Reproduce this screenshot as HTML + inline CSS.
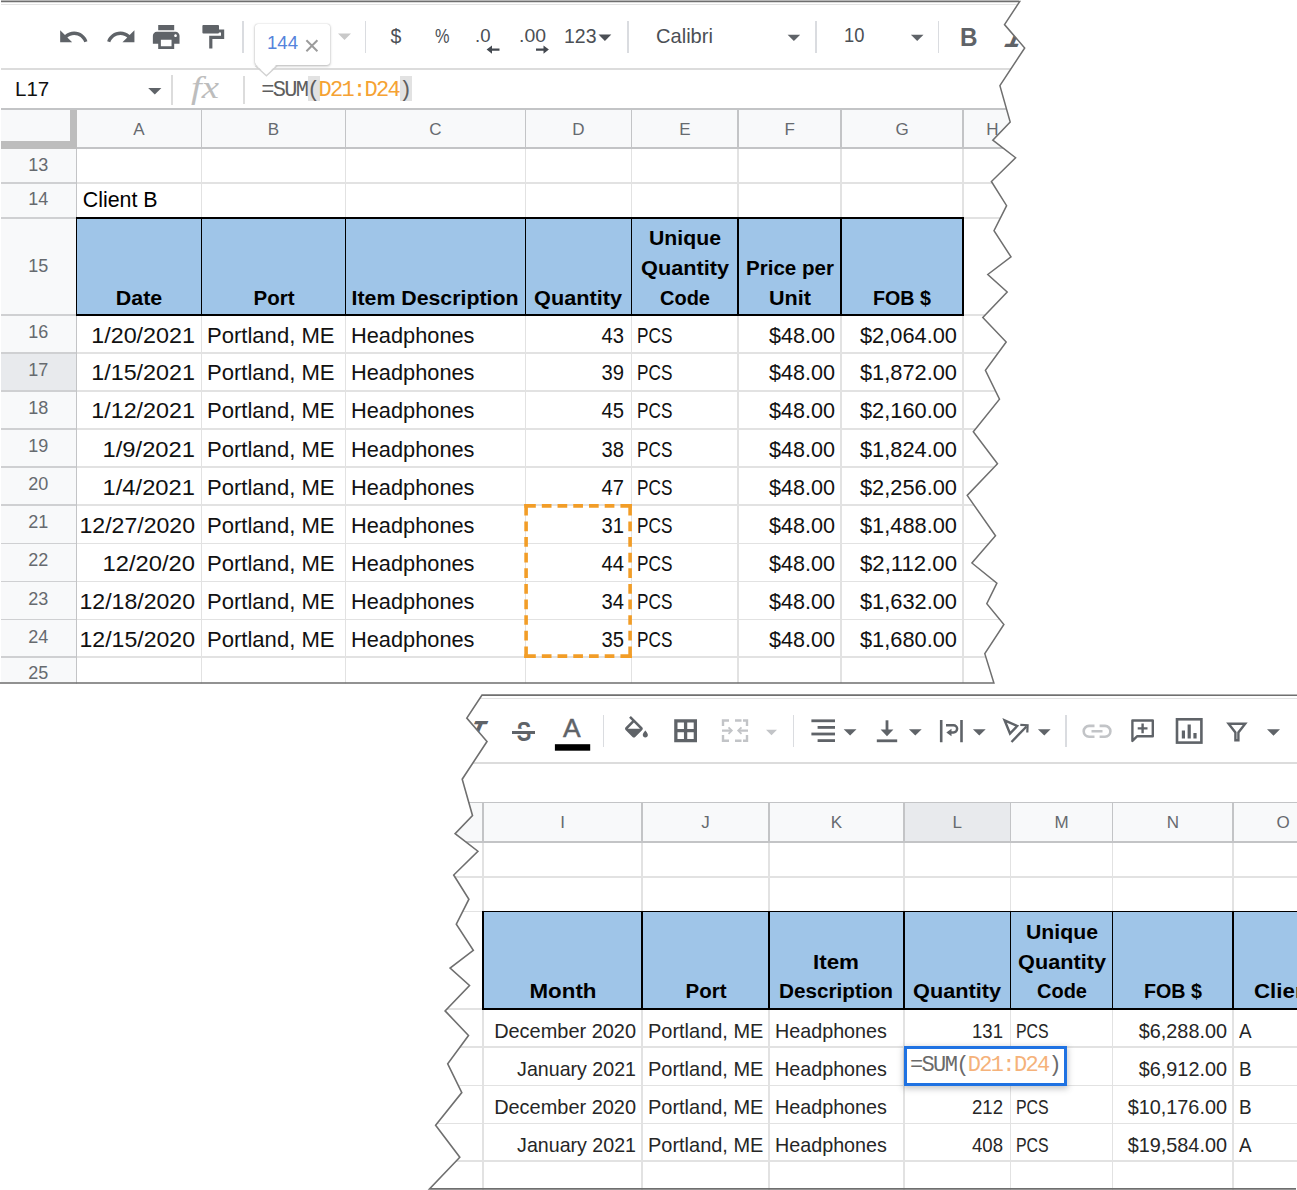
<!DOCTYPE html>
<html><head><meta charset="utf-8"><title>Sheets SUM example</title>
<style>
html,body{margin:0;padding:0;background:#fff;}
body{width:1297px;height:1190px;position:relative;overflow:hidden;}
.frag{position:absolute;left:0;top:0;width:1297px;height:1190px;overflow:hidden;}
.t{position:absolute;white-space:nowrap;display:block;}
.l{position:absolute;display:block;}
svg{position:absolute;left:0;top:0;overflow:visible;}
</style></head><body>
<div class="frag" id="sheet1" style="clip-path:polygon(0px 0px,1019.7px 1.6px,1004.5px 24.6px,1024.7px 48px,999.9px 85.7px,1010.2px 122px,992.8px 140.2px,1015.6px 157.7px,991.4px 181.5px,1006.6px 205.7px,994px 230.7px,1011px 256.9px,987.8px 274.5px,1007.2px 292px,982.8px 317.4px,1006.2px 342px,985.4px 370.3px,999.5px 399.1px,973.3px 431.8px,997.5px 463.7px,967.2px 495.4px,995.5px 535.7px,971.9px 563px,996.9px 583.1px,986.8px 603.7px,1003.9px 624.5px,984.8px 653.7px,993.9px 683px,0px 683.8px)">
<i class="l" style="left:0.0px;top:3.75px;width:1040.0px;height:1.5px;background:#e3e3e3"></i>
<i class="l" style="left:0.0px;top:68.40px;width:1040.0px;height:1.8px;background:#dcdcdc"></i>
<i class="l" style="left:0.0px;top:109.0px;width:1040.0px;height:39.2px;background:#f8f9fa;"></i>
<i class="l" style="left:0.0px;top:148.2px;width:76.3px;height:535.8px;background:#f8f9fa;"></i>
<i class="l" style="left:0.0px;top:352.8px;width:76.3px;height:38.1px;background:#e8eaed;"></i>
<i class="l" style="left:76.3px;top:218.0px;width:886.7px;height:97.0px;background:#9fc5e8;"></i>
<i class="l" style="left:76.3px;top:182.25px;width:963.7px;height:1.5px;background:#e2e2e2"></i>
<i class="l" style="left:76.3px;top:217.25px;width:963.7px;height:1.5px;background:#e2e2e2"></i>
<i class="l" style="left:76.3px;top:314.25px;width:963.7px;height:1.5px;background:#e2e2e2"></i>
<i class="l" style="left:76.3px;top:352.05px;width:963.7px;height:1.5px;background:#e2e2e2"></i>
<i class="l" style="left:76.3px;top:390.15px;width:963.7px;height:1.5px;background:#e2e2e2"></i>
<i class="l" style="left:76.3px;top:428.25px;width:963.7px;height:1.5px;background:#e2e2e2"></i>
<i class="l" style="left:76.3px;top:466.35px;width:963.7px;height:1.5px;background:#e2e2e2"></i>
<i class="l" style="left:76.3px;top:504.45px;width:963.7px;height:1.5px;background:#e2e2e2"></i>
<i class="l" style="left:76.3px;top:542.55px;width:963.7px;height:1.5px;background:#e2e2e2"></i>
<i class="l" style="left:76.3px;top:580.65px;width:963.7px;height:1.5px;background:#e2e2e2"></i>
<i class="l" style="left:76.3px;top:618.75px;width:963.7px;height:1.5px;background:#e2e2e2"></i>
<i class="l" style="left:76.3px;top:656.45px;width:963.7px;height:1.5px;background:#e2e2e2"></i>
<i class="l" style="left:200.85px;top:148.2px;width:1.5px;height:535.8px;background:#e2e2e2"></i>
<i class="l" style="left:344.65px;top:148.2px;width:1.5px;height:535.8px;background:#e2e2e2"></i>
<i class="l" style="left:524.65px;top:148.2px;width:1.5px;height:535.8px;background:#e2e2e2"></i>
<i class="l" style="left:630.65px;top:148.2px;width:1.5px;height:535.8px;background:#e2e2e2"></i>
<i class="l" style="left:737.45px;top:148.2px;width:1.5px;height:535.8px;background:#e2e2e2"></i>
<i class="l" style="left:840.45px;top:148.2px;width:1.5px;height:535.8px;background:#e2e2e2"></i>
<i class="l" style="left:962.25px;top:148.2px;width:1.5px;height:535.8px;background:#e2e2e2"></i>
<i class="l" style="left:0.0px;top:108.25px;width:1040.0px;height:1.5px;background:#c3c4c6"></i>
<i class="l" style="left:0.0px;top:147.45px;width:1040.0px;height:1.5px;background:#c3c4c6"></i>
<i class="l" style="left:200.85px;top:109.0px;width:1.5px;height:39.2px;background:#c3c4c6"></i>
<i class="l" style="left:344.65px;top:109.0px;width:1.5px;height:39.2px;background:#c3c4c6"></i>
<i class="l" style="left:524.65px;top:109.0px;width:1.5px;height:39.2px;background:#c3c4c6"></i>
<i class="l" style="left:630.65px;top:109.0px;width:1.5px;height:39.2px;background:#c3c4c6"></i>
<i class="l" style="left:737.45px;top:109.0px;width:1.5px;height:39.2px;background:#c3c4c6"></i>
<i class="l" style="left:840.45px;top:109.0px;width:1.5px;height:39.2px;background:#c3c4c6"></i>
<i class="l" style="left:962.25px;top:109.0px;width:1.5px;height:39.2px;background:#c3c4c6"></i>
<i class="l" style="left:0.0px;top:182.25px;width:76.3px;height:1.5px;background:#cfd0d2"></i>
<i class="l" style="left:0.0px;top:217.25px;width:76.3px;height:1.5px;background:#cfd0d2"></i>
<i class="l" style="left:0.0px;top:314.25px;width:76.3px;height:1.5px;background:#cfd0d2"></i>
<i class="l" style="left:0.0px;top:352.05px;width:76.3px;height:1.5px;background:#cfd0d2"></i>
<i class="l" style="left:0.0px;top:390.15px;width:76.3px;height:1.5px;background:#cfd0d2"></i>
<i class="l" style="left:0.0px;top:428.25px;width:76.3px;height:1.5px;background:#cfd0d2"></i>
<i class="l" style="left:0.0px;top:466.35px;width:76.3px;height:1.5px;background:#cfd0d2"></i>
<i class="l" style="left:0.0px;top:504.45px;width:76.3px;height:1.5px;background:#cfd0d2"></i>
<i class="l" style="left:0.0px;top:542.55px;width:76.3px;height:1.5px;background:#cfd0d2"></i>
<i class="l" style="left:0.0px;top:580.65px;width:76.3px;height:1.5px;background:#cfd0d2"></i>
<i class="l" style="left:0.0px;top:618.75px;width:76.3px;height:1.5px;background:#cfd0d2"></i>
<i class="l" style="left:0.0px;top:656.45px;width:76.3px;height:1.5px;background:#cfd0d2"></i>
<i class="l" style="left:75.55px;top:148.2px;width:1.5px;height:535.8px;background:#c3c4c6"></i>
<i class="l" style="left:69.8px;top:109.8px;width:7.0px;height:39.0px;background:#bdbdbd;"></i>
<i class="l" style="left:0.0px;top:141.4px;width:76.8px;height:7.4px;background:#bdbdbd;"></i>
<i class="l" style="left:75.6px;top:217.25px;width:888.1px;height:1.5px;background:#000"></i>
<i class="l" style="left:75.6px;top:314.25px;width:888.1px;height:1.5px;background:#000"></i>
<i class="l" style="left:75.55px;top:218.0px;width:1.5px;height:97.0px;background:#000"></i>
<i class="l" style="left:200.85px;top:218.0px;width:1.5px;height:97.0px;background:#000"></i>
<i class="l" style="left:344.65px;top:218.0px;width:1.5px;height:97.0px;background:#000"></i>
<i class="l" style="left:524.65px;top:218.0px;width:1.5px;height:97.0px;background:#000"></i>
<i class="l" style="left:630.65px;top:218.0px;width:1.5px;height:97.0px;background:#000"></i>
<i class="l" style="left:737.45px;top:218.0px;width:1.5px;height:97.0px;background:#000"></i>
<i class="l" style="left:840.45px;top:218.0px;width:1.5px;height:97.0px;background:#000"></i>
<i class="l" style="left:962.25px;top:218.0px;width:1.5px;height:97.0px;background:#000"></i>
<span class="t" style="left:138.9px;top:120.6px;font:17px/17px 'Liberation Sans',Arial,sans-serif;color:#666a6f;transform:translateX(-50%);transform-origin:center center;">A</span>
<span class="t" style="left:273.5px;top:120.6px;font:17px/17px 'Liberation Sans',Arial,sans-serif;color:#666a6f;transform:translateX(-50%);transform-origin:center center;">B</span>
<span class="t" style="left:435.4px;top:120.6px;font:17px/17px 'Liberation Sans',Arial,sans-serif;color:#666a6f;transform:translateX(-50%);transform-origin:center center;">C</span>
<span class="t" style="left:578.4px;top:120.6px;font:17px/17px 'Liberation Sans',Arial,sans-serif;color:#666a6f;transform:translateX(-50%);transform-origin:center center;">D</span>
<span class="t" style="left:684.8px;top:120.6px;font:17px/17px 'Liberation Sans',Arial,sans-serif;color:#666a6f;transform:translateX(-50%);transform-origin:center center;">E</span>
<span class="t" style="left:789.7px;top:120.6px;font:17px/17px 'Liberation Sans',Arial,sans-serif;color:#666a6f;transform:translateX(-50%);transform-origin:center center;">F</span>
<span class="t" style="left:902.1px;top:120.6px;font:17px/17px 'Liberation Sans',Arial,sans-serif;color:#666a6f;transform:translateX(-50%);transform-origin:center center;">G</span>
<span class="t" style="left:992.5px;top:120.6px;font:17px/17px 'Liberation Sans',Arial,sans-serif;color:#666a6f;transform:translateX(-50%);transform-origin:center center;">H</span>
<span class="t" style="left:38.3px;top:155.6px;font:18px/18px 'Liberation Sans',Arial,sans-serif;color:#666a6f;transform:translateX(-50%);transform-origin:center center;">13</span>
<span class="t" style="left:38.3px;top:190.4px;font:18px/18px 'Liberation Sans',Arial,sans-serif;color:#666a6f;transform:translateX(-50%);transform-origin:center center;">14</span>
<span class="t" style="left:38.3px;top:256.6px;font:18px/18px 'Liberation Sans',Arial,sans-serif;color:#666a6f;transform:translateX(-50%);transform-origin:center center;">15</span>
<span class="t" style="left:38.3px;top:323.1px;font:18px/18px 'Liberation Sans',Arial,sans-serif;color:#666a6f;transform:translateX(-50%);transform-origin:center center;">16</span>
<span class="t" style="left:38.3px;top:360.9px;font:18px/18px 'Liberation Sans',Arial,sans-serif;color:#666a6f;transform:translateX(-50%);transform-origin:center center;">17</span>
<span class="t" style="left:38.3px;top:399.0px;font:18px/18px 'Liberation Sans',Arial,sans-serif;color:#666a6f;transform:translateX(-50%);transform-origin:center center;">18</span>
<span class="t" style="left:38.3px;top:437.1px;font:18px/18px 'Liberation Sans',Arial,sans-serif;color:#666a6f;transform:translateX(-50%);transform-origin:center center;">19</span>
<span class="t" style="left:38.3px;top:475.2px;font:18px/18px 'Liberation Sans',Arial,sans-serif;color:#666a6f;transform:translateX(-50%);transform-origin:center center;">20</span>
<span class="t" style="left:38.3px;top:513.3px;font:18px/18px 'Liberation Sans',Arial,sans-serif;color:#666a6f;transform:translateX(-50%);transform-origin:center center;">21</span>
<span class="t" style="left:38.3px;top:551.4px;font:18px/18px 'Liberation Sans',Arial,sans-serif;color:#666a6f;transform:translateX(-50%);transform-origin:center center;">22</span>
<span class="t" style="left:38.3px;top:589.5px;font:18px/18px 'Liberation Sans',Arial,sans-serif;color:#666a6f;transform:translateX(-50%);transform-origin:center center;">23</span>
<span class="t" style="left:38.3px;top:627.6px;font:18px/18px 'Liberation Sans',Arial,sans-serif;color:#666a6f;transform:translateX(-50%);transform-origin:center center;">24</span>
<span class="t" style="left:38.3px;top:664.1px;font:18px/18px 'Liberation Sans',Arial,sans-serif;color:#666a6f;transform:translateX(-50%);transform-origin:center center;">25</span>
<span class="t" style="left:82.7px;top:189.6px;font:21.4px/21.4px 'Liberation Sans',Arial,sans-serif;color:#000;">Client B</span>
<span class="t" style="left:138.9px;top:287.5px;font:bold 20.7px/20.7px 'Liberation Sans',Arial,sans-serif;color:#000;transform:translateX(-50%) scaleX(1.0364);transform-origin:center center;">Date</span>
<span class="t" style="left:273.5px;top:287.5px;font:bold 20.7px/20.7px 'Liberation Sans',Arial,sans-serif;color:#000;transform:translateX(-50%) scaleX(0.9903);transform-origin:center center;">Port</span>
<span class="t" style="left:435.4px;top:287.5px;font:bold 20.7px/20.7px 'Liberation Sans',Arial,sans-serif;color:#000;transform:translateX(-50%) scaleX(1.0297);transform-origin:center center;">Item Description</span>
<span class="t" style="left:578.4px;top:287.5px;font:bold 20.7px/20.7px 'Liberation Sans',Arial,sans-serif;color:#000;transform:translateX(-50%) scaleX(1.0482);transform-origin:center center;">Quantity</span>
<span class="t" style="left:685.3px;top:228.1px;font:bold 20.7px/20.7px 'Liberation Sans',Arial,sans-serif;color:#000;transform:translateX(-50%) scaleX(1.0264);transform-origin:center center;">Unique</span>
<span class="t" style="left:685.3px;top:257.8px;font:bold 20.7px/20.7px 'Liberation Sans',Arial,sans-serif;color:#000;transform:translateX(-50%) scaleX(1.0482);transform-origin:center center;">Quantity</span>
<span class="t" style="left:685.3px;top:287.5px;font:bold 20.7px/20.7px 'Liberation Sans',Arial,sans-serif;color:#000;transform:translateX(-50%) scaleX(0.9662);transform-origin:center center;">Code</span>
<span class="t" style="left:789.7px;top:257.8px;font:bold 20.7px/20.7px 'Liberation Sans',Arial,sans-serif;color:#000;transform:translateX(-50%) scaleX(0.9932);transform-origin:center center;">Price per</span>
<span class="t" style="left:789.7px;top:287.5px;font:bold 20.7px/20.7px 'Liberation Sans',Arial,sans-serif;color:#000;transform:translateX(-50%) scaleX(1.0438);transform-origin:center center;">Unit</span>
<span class="t" style="left:902.1px;top:287.5px;font:bold 20.7px/20.7px 'Liberation Sans',Arial,sans-serif;color:#000;transform:translateX(-50%) scaleX(0.9515);transform-origin:center center;">FOB $</span>
<span class="t" style="left:195.0px;top:325.5px;font:21.5px/21.5px 'Liberation Sans',Arial,sans-serif;color:#111;transform:translateX(-100%) scaleX(1.0852);transform-origin:right center;">1/20/2021</span>
<span class="t" style="left:207.4px;top:325.5px;font:21.5px/21.5px 'Liberation Sans',Arial,sans-serif;color:#111;transform:scaleX(1.0259);transform-origin:left center;">Portland, ME</span>
<span class="t" style="left:351.3px;top:325.5px;font:21.5px/21.5px 'Liberation Sans',Arial,sans-serif;color:#111;transform:scaleX(1.0128);transform-origin:left center;">Headphones</span>
<span class="t" style="left:624.2px;top:325.5px;font:21.5px/21.5px 'Liberation Sans',Arial,sans-serif;color:#111;transform:translateX(-100%) scaleX(0.9408);transform-origin:right center;">43</span>
<span class="t" style="left:637.3px;top:325.5px;font:21.5px/21.5px 'Liberation Sans',Arial,sans-serif;color:#111;transform:scaleX(0.8007);transform-origin:left center;">PCS</span>
<span class="t" style="left:835.0px;top:325.5px;font:21.5px/21.5px 'Liberation Sans',Arial,sans-serif;color:#111;transform:translateX(-100%) scaleX(1.0036);transform-origin:right center;">$48.00</span>
<span class="t" style="left:957.2px;top:325.5px;font:21.5px/21.5px 'Liberation Sans',Arial,sans-serif;color:#111;transform:translateX(-100%) scaleX(1.0141);transform-origin:right center;">$2,064.00</span>
<span class="t" style="left:195.0px;top:363.3px;font:21.5px/21.5px 'Liberation Sans',Arial,sans-serif;color:#111;transform:translateX(-100%) scaleX(1.0852);transform-origin:right center;">1/15/2021</span>
<span class="t" style="left:207.4px;top:363.3px;font:21.5px/21.5px 'Liberation Sans',Arial,sans-serif;color:#111;transform:scaleX(1.0259);transform-origin:left center;">Portland, ME</span>
<span class="t" style="left:351.3px;top:363.3px;font:21.5px/21.5px 'Liberation Sans',Arial,sans-serif;color:#111;transform:scaleX(1.0128);transform-origin:left center;">Headphones</span>
<span class="t" style="left:624.2px;top:363.3px;font:21.5px/21.5px 'Liberation Sans',Arial,sans-serif;color:#111;transform:translateX(-100%) scaleX(0.9408);transform-origin:right center;">39</span>
<span class="t" style="left:637.3px;top:363.3px;font:21.5px/21.5px 'Liberation Sans',Arial,sans-serif;color:#111;transform:scaleX(0.8007);transform-origin:left center;">PCS</span>
<span class="t" style="left:835.0px;top:363.3px;font:21.5px/21.5px 'Liberation Sans',Arial,sans-serif;color:#111;transform:translateX(-100%) scaleX(1.0036);transform-origin:right center;">$48.00</span>
<span class="t" style="left:957.2px;top:363.3px;font:21.5px/21.5px 'Liberation Sans',Arial,sans-serif;color:#111;transform:translateX(-100%) scaleX(1.0141);transform-origin:right center;">$1,872.00</span>
<span class="t" style="left:195.0px;top:401.4px;font:21.5px/21.5px 'Liberation Sans',Arial,sans-serif;color:#111;transform:translateX(-100%) scaleX(1.0852);transform-origin:right center;">1/12/2021</span>
<span class="t" style="left:207.4px;top:401.4px;font:21.5px/21.5px 'Liberation Sans',Arial,sans-serif;color:#111;transform:scaleX(1.0259);transform-origin:left center;">Portland, ME</span>
<span class="t" style="left:351.3px;top:401.4px;font:21.5px/21.5px 'Liberation Sans',Arial,sans-serif;color:#111;transform:scaleX(1.0128);transform-origin:left center;">Headphones</span>
<span class="t" style="left:624.2px;top:401.4px;font:21.5px/21.5px 'Liberation Sans',Arial,sans-serif;color:#111;transform:translateX(-100%) scaleX(0.9408);transform-origin:right center;">45</span>
<span class="t" style="left:637.3px;top:401.4px;font:21.5px/21.5px 'Liberation Sans',Arial,sans-serif;color:#111;transform:scaleX(0.8007);transform-origin:left center;">PCS</span>
<span class="t" style="left:835.0px;top:401.4px;font:21.5px/21.5px 'Liberation Sans',Arial,sans-serif;color:#111;transform:translateX(-100%) scaleX(1.0036);transform-origin:right center;">$48.00</span>
<span class="t" style="left:957.2px;top:401.4px;font:21.5px/21.5px 'Liberation Sans',Arial,sans-serif;color:#111;transform:translateX(-100%) scaleX(1.0141);transform-origin:right center;">$2,160.00</span>
<span class="t" style="left:195.0px;top:439.5px;font:21.5px/21.5px 'Liberation Sans',Arial,sans-serif;color:#111;transform:translateX(-100%) scaleX(1.1052);transform-origin:right center;">1/9/2021</span>
<span class="t" style="left:207.4px;top:439.5px;font:21.5px/21.5px 'Liberation Sans',Arial,sans-serif;color:#111;transform:scaleX(1.0259);transform-origin:left center;">Portland, ME</span>
<span class="t" style="left:351.3px;top:439.5px;font:21.5px/21.5px 'Liberation Sans',Arial,sans-serif;color:#111;transform:scaleX(1.0128);transform-origin:left center;">Headphones</span>
<span class="t" style="left:624.2px;top:439.5px;font:21.5px/21.5px 'Liberation Sans',Arial,sans-serif;color:#111;transform:translateX(-100%) scaleX(0.9408);transform-origin:right center;">38</span>
<span class="t" style="left:637.3px;top:439.5px;font:21.5px/21.5px 'Liberation Sans',Arial,sans-serif;color:#111;transform:scaleX(0.8007);transform-origin:left center;">PCS</span>
<span class="t" style="left:835.0px;top:439.5px;font:21.5px/21.5px 'Liberation Sans',Arial,sans-serif;color:#111;transform:translateX(-100%) scaleX(1.0036);transform-origin:right center;">$48.00</span>
<span class="t" style="left:957.2px;top:439.5px;font:21.5px/21.5px 'Liberation Sans',Arial,sans-serif;color:#111;transform:translateX(-100%) scaleX(1.0141);transform-origin:right center;">$1,824.00</span>
<span class="t" style="left:195.0px;top:477.6px;font:21.5px/21.5px 'Liberation Sans',Arial,sans-serif;color:#111;transform:translateX(-100%) scaleX(1.1052);transform-origin:right center;">1/4/2021</span>
<span class="t" style="left:207.4px;top:477.6px;font:21.5px/21.5px 'Liberation Sans',Arial,sans-serif;color:#111;transform:scaleX(1.0259);transform-origin:left center;">Portland, ME</span>
<span class="t" style="left:351.3px;top:477.6px;font:21.5px/21.5px 'Liberation Sans',Arial,sans-serif;color:#111;transform:scaleX(1.0128);transform-origin:left center;">Headphones</span>
<span class="t" style="left:624.2px;top:477.6px;font:21.5px/21.5px 'Liberation Sans',Arial,sans-serif;color:#111;transform:translateX(-100%) scaleX(0.9408);transform-origin:right center;">47</span>
<span class="t" style="left:637.3px;top:477.6px;font:21.5px/21.5px 'Liberation Sans',Arial,sans-serif;color:#111;transform:scaleX(0.8007);transform-origin:left center;">PCS</span>
<span class="t" style="left:835.0px;top:477.6px;font:21.5px/21.5px 'Liberation Sans',Arial,sans-serif;color:#111;transform:translateX(-100%) scaleX(1.0036);transform-origin:right center;">$48.00</span>
<span class="t" style="left:957.2px;top:477.6px;font:21.5px/21.5px 'Liberation Sans',Arial,sans-serif;color:#111;transform:translateX(-100%) scaleX(1.0141);transform-origin:right center;">$2,256.00</span>
<span class="t" style="left:195.0px;top:515.7px;font:21.5px/21.5px 'Liberation Sans',Arial,sans-serif;color:#111;transform:translateX(-100%) scaleX(1.0733);transform-origin:right center;">12/27/2020</span>
<span class="t" style="left:207.4px;top:515.7px;font:21.5px/21.5px 'Liberation Sans',Arial,sans-serif;color:#111;transform:scaleX(1.0259);transform-origin:left center;">Portland, ME</span>
<span class="t" style="left:351.3px;top:515.7px;font:21.5px/21.5px 'Liberation Sans',Arial,sans-serif;color:#111;transform:scaleX(1.0128);transform-origin:left center;">Headphones</span>
<span class="t" style="left:624.2px;top:515.7px;font:21.5px/21.5px 'Liberation Sans',Arial,sans-serif;color:#111;transform:translateX(-100%) scaleX(0.9408);transform-origin:right center;">31</span>
<span class="t" style="left:637.3px;top:515.7px;font:21.5px/21.5px 'Liberation Sans',Arial,sans-serif;color:#111;transform:scaleX(0.8007);transform-origin:left center;">PCS</span>
<span class="t" style="left:835.0px;top:515.7px;font:21.5px/21.5px 'Liberation Sans',Arial,sans-serif;color:#111;transform:translateX(-100%) scaleX(1.0036);transform-origin:right center;">$48.00</span>
<span class="t" style="left:957.2px;top:515.7px;font:21.5px/21.5px 'Liberation Sans',Arial,sans-serif;color:#111;transform:translateX(-100%) scaleX(1.0141);transform-origin:right center;">$1,488.00</span>
<span class="t" style="left:195.0px;top:553.8px;font:21.5px/21.5px 'Liberation Sans',Arial,sans-serif;color:#111;transform:translateX(-100%) scaleX(1.1052);transform-origin:right center;">12/20/20</span>
<span class="t" style="left:207.4px;top:553.8px;font:21.5px/21.5px 'Liberation Sans',Arial,sans-serif;color:#111;transform:scaleX(1.0259);transform-origin:left center;">Portland, ME</span>
<span class="t" style="left:351.3px;top:553.8px;font:21.5px/21.5px 'Liberation Sans',Arial,sans-serif;color:#111;transform:scaleX(1.0128);transform-origin:left center;">Headphones</span>
<span class="t" style="left:624.2px;top:553.8px;font:21.5px/21.5px 'Liberation Sans',Arial,sans-serif;color:#111;transform:translateX(-100%) scaleX(0.9408);transform-origin:right center;">44</span>
<span class="t" style="left:637.3px;top:553.8px;font:21.5px/21.5px 'Liberation Sans',Arial,sans-serif;color:#111;transform:scaleX(0.8007);transform-origin:left center;">PCS</span>
<span class="t" style="left:835.0px;top:553.8px;font:21.5px/21.5px 'Liberation Sans',Arial,sans-serif;color:#111;transform:translateX(-100%) scaleX(1.0036);transform-origin:right center;">$48.00</span>
<span class="t" style="left:957.2px;top:553.8px;font:21.5px/21.5px 'Liberation Sans',Arial,sans-serif;color:#111;transform:translateX(-100%) scaleX(1.0313);transform-origin:right center;">$2,112.00</span>
<span class="t" style="left:195.0px;top:591.9px;font:21.5px/21.5px 'Liberation Sans',Arial,sans-serif;color:#111;transform:translateX(-100%) scaleX(1.0733);transform-origin:right center;">12/18/2020</span>
<span class="t" style="left:207.4px;top:591.9px;font:21.5px/21.5px 'Liberation Sans',Arial,sans-serif;color:#111;transform:scaleX(1.0259);transform-origin:left center;">Portland, ME</span>
<span class="t" style="left:351.3px;top:591.9px;font:21.5px/21.5px 'Liberation Sans',Arial,sans-serif;color:#111;transform:scaleX(1.0128);transform-origin:left center;">Headphones</span>
<span class="t" style="left:624.2px;top:591.9px;font:21.5px/21.5px 'Liberation Sans',Arial,sans-serif;color:#111;transform:translateX(-100%) scaleX(0.9408);transform-origin:right center;">34</span>
<span class="t" style="left:637.3px;top:591.9px;font:21.5px/21.5px 'Liberation Sans',Arial,sans-serif;color:#111;transform:scaleX(0.8007);transform-origin:left center;">PCS</span>
<span class="t" style="left:835.0px;top:591.9px;font:21.5px/21.5px 'Liberation Sans',Arial,sans-serif;color:#111;transform:translateX(-100%) scaleX(1.0036);transform-origin:right center;">$48.00</span>
<span class="t" style="left:957.2px;top:591.9px;font:21.5px/21.5px 'Liberation Sans',Arial,sans-serif;color:#111;transform:translateX(-100%) scaleX(1.0141);transform-origin:right center;">$1,632.00</span>
<span class="t" style="left:195.0px;top:630.0px;font:21.5px/21.5px 'Liberation Sans',Arial,sans-serif;color:#111;transform:translateX(-100%) scaleX(1.0733);transform-origin:right center;">12/15/2020</span>
<span class="t" style="left:207.4px;top:630.0px;font:21.5px/21.5px 'Liberation Sans',Arial,sans-serif;color:#111;transform:scaleX(1.0259);transform-origin:left center;">Portland, ME</span>
<span class="t" style="left:351.3px;top:630.0px;font:21.5px/21.5px 'Liberation Sans',Arial,sans-serif;color:#111;transform:scaleX(1.0128);transform-origin:left center;">Headphones</span>
<span class="t" style="left:624.2px;top:630.0px;font:21.5px/21.5px 'Liberation Sans',Arial,sans-serif;color:#111;transform:translateX(-100%) scaleX(0.9408);transform-origin:right center;">35</span>
<span class="t" style="left:637.3px;top:630.0px;font:21.5px/21.5px 'Liberation Sans',Arial,sans-serif;color:#111;transform:scaleX(0.8007);transform-origin:left center;">PCS</span>
<span class="t" style="left:835.0px;top:630.0px;font:21.5px/21.5px 'Liberation Sans',Arial,sans-serif;color:#111;transform:translateX(-100%) scaleX(1.0036);transform-origin:right center;">$48.00</span>
<span class="t" style="left:957.2px;top:630.0px;font:21.5px/21.5px 'Liberation Sans',Arial,sans-serif;color:#111;transform:translateX(-100%) scaleX(1.0141);transform-origin:right center;">$1,680.00</span>
<svg width="1297" height="700"><g fill="none" stroke="#f29d27" stroke-width="3.6"><path d="M524.3000000000001 505.9H631.9M524.3000000000001 656.1H631.9" stroke-dasharray="11.50 6.02 9.70 6.02 9.70 6.02 9.70 6.02 9.70 6.02 9.70 6.02 11.50 0"/><path d="M526.1 504.09999999999997V657.9M630.1 504.09999999999997V657.9" stroke-dasharray="11.50 5.91 9.70 5.91 9.70 5.91 9.70 5.91 9.70 5.91 9.70 5.91 9.70 5.91 9.70 5.91 9.70 5.91 11.50 0"/></g></svg>
<span class="t" style="left:15.0px;top:79.0px;font:20.5px/20.5px 'Liberation Sans',Arial,sans-serif;color:#111;">L17</span>
<svg width="1297" height="120"><path d="M148.2 87.9h13.2l-6.6 6.6z" fill="#5f6368"/></svg>
<i class="l" style="left:171.00px;top:74.6px;width:1.6px;height:30.3px;background:#dcdcdc"></i>
<i class="l" style="left:243.40px;top:75.5px;width:1.6px;height:28.0px;background:#dcdcdc"></i>
<span class="t" style="left:191.0px;top:71.7px;font:31px/31px 'Liberation Serif',serif;color:#bdbdbd;font-style:italic;transform:scaleX(1.25);transform-origin:left center;">fx</span>
<i class="l" style="left:308.2px;top:76.0px;width:11.6px;height:25.2px;background:#e2e2e2;"></i>
<i class="l" style="left:400.4px;top:76.0px;width:11.6px;height:25.2px;background:#e2e2e2;"></i>
<span class="t" style="left:261.2px;top:80.1px;font:22px/22px 'Liberation Mono',monospace;letter-spacing:-1.72px;color:#5e5e5e">=SUM(<span style="color:#f5a233">D21:D24</span>)</span>
<svg width="1297" height="1190"><g transform="translate(57.5 20.9) scale(1.3333)"><path d="M12.5 8c-2.65 0-5.05.99-6.9 2.6L2 7v9h9l-3.62-3.62c1.39-1.16 3.16-1.88 5.12-1.88 3.54 0 6.55 2.31 7.6 5.5l2.37-.78C21.08 11.03 17.15 8 12.5 8z" fill="#5f6368"/></g></svg>
<svg width="1297" height="1190"><g transform="translate(105.1 20.9) scale(1.3333)"><path d="M18.4 10.6C16.55 8.99 14.15 8 11.5 8c-4.65 0-8.58 3.03-9.96 7.22L3.9 16c1.05-3.19 4.05-5.5 7.6-5.5 1.95 0 3.73.72 5.12 1.88L13 16h9V7l-3.6 3.6z" fill="#5f6368"/></g></svg>
<svg width="1297" height="1190"><g transform="translate(150.2 21.0) scale(1.3333)"><path d="M19 8H5c-1.66 0-3 1.34-3 3v6h4v4h12v-4h4v-6c0-1.66-1.34-3-3-3zm-3 11H8v-5h8v5zm3-7c-.55 0-1-.45-1-1s.45-1 1-1 1 .45 1 1-.45 1-1 1zm-1-9H6v4h12V3z" fill="#5f6368"/></g></svg>
<svg width="1297" height="1190"><rect x="202.4" y="25" width="16.6" height="8.6" rx="1" fill="#5f6368"/><path d="M219 31h3.6v6.4H210.8v11.1" fill="none" stroke="#5f6368" stroke-width="3.2"/></svg>
<i class="l" style="left:242.10px;top:20.5px;width:1.6px;height:32.7px;background:#dadce0"></i>
<i class="l" style="left:364.50px;top:20.5px;width:1.6px;height:32.7px;background:#dadce0"></i>
<i class="l" style="left:627.00px;top:20.5px;width:1.6px;height:32.7px;background:#dadce0"></i>
<i class="l" style="left:815.20px;top:20.5px;width:1.6px;height:32.7px;background:#dadce0"></i>
<i class="l" style="left:937.90px;top:20.5px;width:1.6px;height:32.7px;background:#dadce0"></i>
<div class="l" style="left:254.8px;top:23.8px;width:75.6px;height:41px;background:#fff;border-radius:3px;box-shadow:0 1px 3px rgba(0,0,0,.28),0 0 1px rgba(0,0,0,.25)"></div>
<svg width="1297" height="1190"><path d="M255.6 64h21.4l-10.600 11z" fill="#fff"/><path d="M255.4 65.8l11 10 10.800-10" fill="none" stroke="#d2d2d2" stroke-width="1.300"/></svg>
<span class="t" style="left:267.0px;top:34.3px;font:18.6px/18.6px 'Liberation Sans',Arial,sans-serif;color:#5583db;transform:scaleX(0.9989);transform-origin:left center;">144</span>
<svg width="1297" height="1190"><path d="M306.4 40.2l11 11M317.4 40.2l-11 11" stroke="#9c9c9c" stroke-width="2" fill="none"/></svg>
<svg width="1297" height="1190"><path d="M338.0 33.4h13.0l-6.5 6.5z" fill="#c9c9c9"/></svg>
<span class="t" style="left:390.6px;top:26.8px;font:19.5px/19.5px 'Liberation Sans',Arial,sans-serif;color:#4b4f55;">$</span>
<span class="t" style="left:435.0px;top:26.8px;font:19.5px/19.5px 'Liberation Sans',Arial,sans-serif;color:#4b4f55;transform:scaleX(0.8363);transform-origin:left center;">%</span>
<span class="t" style="left:475.0px;top:27.1px;font:18.5px/18.5px 'Liberation Sans',Arial,sans-serif;color:#4b4f55;transform:scaleX(1.0046);transform-origin:left center;">.0</span>
<span class="t" style="left:519.3px;top:27.1px;font:18.5px/18.5px 'Liberation Sans',Arial,sans-serif;color:#4b4f55;transform:scaleX(1.0499);transform-origin:left center;">.00</span>
<svg width="1297" height="1190"><path d="M499.5 49.6h-9M536 49.6h9" stroke="#444950" stroke-width="2.2" fill="none"/><path d="M486.6 49.6l5.4-4.200v8.400zM548.9 49.6l-5.4-4.200v8.400z" fill="#444950"/></svg>
<span class="t" style="left:563.5px;top:26.8px;font:19.5px/19.5px 'Liberation Sans',Arial,sans-serif;color:#4b4f55;transform:scaleX(0.9989);transform-origin:left center;">123</span>
<svg width="1297" height="1190"><path d="M598.5 34.6h12.8l-6.4 6.4z" fill="#4b4f55"/></svg>
<span class="t" style="left:656.4px;top:26.0px;font:20.3px/20.3px 'Liberation Sans',Arial,sans-serif;color:#4b4f55;transform:scaleX(0.9907);transform-origin:left center;">Calibri</span>
<svg width="1297" height="1190"><path d="M787.6 34.8h12.6l-6.3 6.3z" fill="#5f6368"/></svg>
<span class="t" style="left:843.8px;top:26.1px;font:19.5px/19.5px 'Liberation Sans',Arial,sans-serif;color:#4b4f55;transform:scaleX(0.9405);transform-origin:left center;">10</span>
<svg width="1297" height="1190"><path d="M910.9 34.8h12.6l-6.3 6.3z" fill="#5f6368"/></svg>
<span class="t" style="left:959.8px;top:24.0px;font:bold 26.5px/26.5px 'Liberation Sans',Arial,sans-serif;color:#5f6368;transform:scaleX(0.9144);transform-origin:left center;">B</span>
<span class="t" style="left:1002.2px;top:24.7px;font:italic bold 29px/29px 'Liberation Mono',monospace;color:#5f6368;transform:skewX(-13deg);transform-origin:left bottom">I</span>
<i class="l" style="left:0.0px;top:2.2px;width:1.0px;height:679.8px;background:#fff;"></i>
</div>
<svg width="1297" height="1190"><path d="M1 0.4H1019" stroke="#cacaca" stroke-width="1" fill="none"/><polyline points="1,1.5 1019.7,1.6 1004.5,24.6 1024.7,48 999.9,85.7 1010.2,122 992.8,140.2 1015.6,157.7 991.4,181.5 1006.6,205.7 994,230.7 1011,256.9 987.8,274.5 1007.2,292 982.8,317.4 1006.2,342 985.4,370.3 999.5,399.1 973.3,431.8 997.5,463.7 967.2,495.4 995.5,535.7 971.9,563 996.9,583.1 986.8,603.7 1003.9,624.5 984.8,653.7 993.9,683 0,683" fill="none" stroke="#6f6f6f" stroke-width="1.5" stroke-linejoin="miter"/></svg>
<div class="frag" id="sheet2" style="clip-path:polygon(1297px 695px,482.0px 695.1px,466.8px 718.1px,487.0px 741.5px,462.2px 779.2px,472.5px 815.5px,455.1px 833.7px,477.9px 851.2px,453.7px 875.0px,468.9px 899.2px,456.3px 924.2px,473.3px 950.4px,450.1px 968.0px,469.5px 985.5px,445.1px 1010.9px,468.5px 1035.5px,447.7px 1063.8px,461.8px 1092.6px,435.6px 1125.3px,459.8px 1157.2px,429.5px 1188.9px,429.5px 1190px,1297px 1190px)">
<i class="l" style="left:400.0px;top:697.80px;width:897.0px;height:1.6px;background:#e3e3e3"></i>
<i class="l" style="left:400.0px;top:762.10px;width:897.0px;height:1.8px;background:#dcdcdc"></i>
<i class="l" style="left:400.0px;top:802.4px;width:897.0px;height:39.4px;background:#f8f9fa;"></i>
<i class="l" style="left:904.0px;top:802.4px;width:106.4px;height:39.4px;background:#e8eaed;"></i>
<i class="l" style="left:483.0px;top:911.6px;width:814.0px;height:97.4px;background:#9fc5e8;"></i>
<i class="l" style="left:400.0px;top:876.25px;width:897.0px;height:1.5px;background:#e2e2e2"></i>
<i class="l" style="left:400.0px;top:910.85px;width:897.0px;height:1.5px;background:#e2e2e2"></i>
<i class="l" style="left:400.0px;top:1008.25px;width:897.0px;height:1.5px;background:#e2e2e2"></i>
<i class="l" style="left:400.0px;top:1046.45px;width:897.0px;height:1.5px;background:#e2e2e2"></i>
<i class="l" style="left:400.0px;top:1084.55px;width:897.0px;height:1.5px;background:#e2e2e2"></i>
<i class="l" style="left:400.0px;top:1122.55px;width:897.0px;height:1.5px;background:#e2e2e2"></i>
<i class="l" style="left:400.0px;top:1160.45px;width:897.0px;height:1.5px;background:#e2e2e2"></i>
<i class="l" style="left:482.25px;top:841.8px;width:1.5px;height:348.2px;background:#e2e2e2"></i>
<i class="l" style="left:641.45px;top:841.8px;width:1.5px;height:348.2px;background:#e2e2e2"></i>
<i class="l" style="left:768.05px;top:841.8px;width:1.5px;height:348.2px;background:#e2e2e2"></i>
<i class="l" style="left:903.25px;top:841.8px;width:1.5px;height:348.2px;background:#e2e2e2"></i>
<i class="l" style="left:1009.65px;top:841.8px;width:1.5px;height:348.2px;background:#e2e2e2"></i>
<i class="l" style="left:1111.85px;top:841.8px;width:1.5px;height:348.2px;background:#e2e2e2"></i>
<i class="l" style="left:1232.25px;top:841.8px;width:1.5px;height:348.2px;background:#e2e2e2"></i>
<i class="l" style="left:400.0px;top:801.65px;width:897.0px;height:1.5px;background:#c3c4c6"></i>
<i class="l" style="left:400.0px;top:841.05px;width:897.0px;height:1.5px;background:#c3c4c6"></i>
<i class="l" style="left:482.25px;top:802.4px;width:1.5px;height:39.4px;background:#c3c4c6"></i>
<i class="l" style="left:641.45px;top:802.4px;width:1.5px;height:39.4px;background:#c3c4c6"></i>
<i class="l" style="left:768.05px;top:802.4px;width:1.5px;height:39.4px;background:#c3c4c6"></i>
<i class="l" style="left:903.25px;top:802.4px;width:1.5px;height:39.4px;background:#c3c4c6"></i>
<i class="l" style="left:1009.65px;top:802.4px;width:1.5px;height:39.4px;background:#c3c4c6"></i>
<i class="l" style="left:1111.85px;top:802.4px;width:1.5px;height:39.4px;background:#c3c4c6"></i>
<i class="l" style="left:1232.25px;top:802.4px;width:1.5px;height:39.4px;background:#c3c4c6"></i>
<i class="l" style="left:482.3px;top:910.85px;width:814.7px;height:1.5px;background:#000"></i>
<i class="l" style="left:482.3px;top:1008.25px;width:814.7px;height:1.5px;background:#000"></i>
<i class="l" style="left:482.25px;top:911.6px;width:1.5px;height:97.4px;background:#000"></i>
<i class="l" style="left:641.45px;top:911.6px;width:1.5px;height:97.4px;background:#000"></i>
<i class="l" style="left:768.05px;top:911.6px;width:1.5px;height:97.4px;background:#000"></i>
<i class="l" style="left:903.25px;top:911.6px;width:1.5px;height:97.4px;background:#000"></i>
<i class="l" style="left:1009.65px;top:911.6px;width:1.5px;height:97.4px;background:#000"></i>
<i class="l" style="left:1111.85px;top:911.6px;width:1.5px;height:97.4px;background:#000"></i>
<i class="l" style="left:1232.25px;top:911.6px;width:1.5px;height:97.4px;background:#000"></i>
<span class="t" style="left:562.6px;top:814.2px;font:17px/17px 'Liberation Sans',Arial,sans-serif;color:#666a6f;transform:translateX(-50%);transform-origin:center center;">I</span>
<span class="t" style="left:705.5px;top:814.2px;font:17px/17px 'Liberation Sans',Arial,sans-serif;color:#666a6f;transform:translateX(-50%);transform-origin:center center;">J</span>
<span class="t" style="left:836.4px;top:814.2px;font:17px/17px 'Liberation Sans',Arial,sans-serif;color:#666a6f;transform:translateX(-50%);transform-origin:center center;">K</span>
<span class="t" style="left:957.2px;top:814.2px;font:17px/17px 'Liberation Sans',Arial,sans-serif;color:#666a6f;transform:translateX(-50%);transform-origin:center center;">L</span>
<span class="t" style="left:1061.5px;top:814.2px;font:17px/17px 'Liberation Sans',Arial,sans-serif;color:#666a6f;transform:translateX(-50%);transform-origin:center center;">M</span>
<span class="t" style="left:1172.8px;top:814.2px;font:17px/17px 'Liberation Sans',Arial,sans-serif;color:#666a6f;transform:translateX(-50%);transform-origin:center center;">N</span>
<span class="t" style="left:1283.0px;top:814.2px;font:17px/17px 'Liberation Sans',Arial,sans-serif;color:#666a6f;transform:translateX(-50%);transform-origin:center center;">O</span>
<span class="t" style="left:562.6px;top:981.2px;font:bold 20.7px/20.7px 'Liberation Sans',Arial,sans-serif;color:#000;transform:translateX(-50%) scaleX(1.0794);transform-origin:center center;">Month</span>
<span class="t" style="left:705.5px;top:981.2px;font:bold 20.7px/20.7px 'Liberation Sans',Arial,sans-serif;color:#000;transform:translateX(-50%) scaleX(0.9903);transform-origin:center center;">Port</span>
<span class="t" style="left:836.4px;top:951.5px;font:bold 20.7px/20.7px 'Liberation Sans',Arial,sans-serif;color:#000;transform:translateX(-50%) scaleX(1.0808);transform-origin:center center;">Item</span>
<span class="t" style="left:836.4px;top:981.2px;font:bold 20.7px/20.7px 'Liberation Sans',Arial,sans-serif;color:#000;transform:translateX(-50%) scaleX(1.0011);transform-origin:center center;">Description</span>
<span class="t" style="left:957.2px;top:981.2px;font:bold 20.7px/20.7px 'Liberation Sans',Arial,sans-serif;color:#000;transform:translateX(-50%) scaleX(1.0482);transform-origin:center center;">Quantity</span>
<span class="t" style="left:1062.0px;top:921.8px;font:bold 20.7px/20.7px 'Liberation Sans',Arial,sans-serif;color:#000;transform:translateX(-50%) scaleX(1.0264);transform-origin:center center;">Unique</span>
<span class="t" style="left:1062.0px;top:951.5px;font:bold 20.7px/20.7px 'Liberation Sans',Arial,sans-serif;color:#000;transform:translateX(-50%) scaleX(1.0482);transform-origin:center center;">Quantity</span>
<span class="t" style="left:1062.0px;top:981.2px;font:bold 20.7px/20.7px 'Liberation Sans',Arial,sans-serif;color:#000;transform:translateX(-50%) scaleX(0.9662);transform-origin:center center;">Code</span>
<span class="t" style="left:1172.8px;top:981.2px;font:bold 20.7px/20.7px 'Liberation Sans',Arial,sans-serif;color:#000;transform:translateX(-50%) scaleX(0.9515);transform-origin:center center;">FOB $</span>
<span class="t" style="left:1253.6px;top:981.2px;font:bold 20.7px/20.7px 'Liberation Sans',Arial,sans-serif;color:#000;transform:scaleX(1.0782);transform-origin:left center;">Client</span>
<span class="t" style="left:636.0px;top:1021.8px;font:19.8px/19.8px 'Liberation Sans',Arial,sans-serif;color:#262626;transform:translateX(-100%) scaleX(1.0079);transform-origin:right center;">December 2020</span>
<span class="t" style="left:648.0px;top:1021.8px;font:19.8px/19.8px 'Liberation Sans',Arial,sans-serif;color:#262626;transform:scaleX(1.0091);transform-origin:left center;">Portland, ME</span>
<span class="t" style="left:775.0px;top:1021.8px;font:19.8px/19.8px 'Liberation Sans',Arial,sans-serif;color:#262626;transform:scaleX(0.9974);transform-origin:left center;">Headphones</span>
<span class="t" style="left:1003.4px;top:1021.8px;font:19.8px/19.8px 'Liberation Sans',Arial,sans-serif;color:#262626;transform:translateX(-100%) scaleX(0.9384);transform-origin:right center;">131</span>
<span class="t" style="left:1016.0px;top:1021.8px;font:19.8px/19.8px 'Liberation Sans',Arial,sans-serif;color:#262626;transform:scaleX(0.8032);transform-origin:left center;">PCS</span>
<span class="t" style="left:1227.3px;top:1021.8px;font:19.8px/19.8px 'Liberation Sans',Arial,sans-serif;color:#262626;transform:translateX(-100%) scaleX(1.0024);transform-origin:right center;">$6,288.00</span>
<span class="t" style="left:1238.6px;top:1021.8px;font:19.8px/19.8px 'Liberation Sans',Arial,sans-serif;color:#262626;transform:scaleX(0.9540);transform-origin:left center;">A</span>
<span class="t" style="left:636.0px;top:1060.0px;font:19.8px/19.8px 'Liberation Sans',Arial,sans-serif;color:#262626;transform:translateX(-100%) scaleX(0.9917);transform-origin:right center;">January 2021</span>
<span class="t" style="left:648.0px;top:1060.0px;font:19.8px/19.8px 'Liberation Sans',Arial,sans-serif;color:#262626;transform:scaleX(1.0091);transform-origin:left center;">Portland, ME</span>
<span class="t" style="left:775.0px;top:1060.0px;font:19.8px/19.8px 'Liberation Sans',Arial,sans-serif;color:#262626;transform:scaleX(0.9974);transform-origin:left center;">Headphones</span>
<span class="t" style="left:1227.3px;top:1060.0px;font:19.8px/19.8px 'Liberation Sans',Arial,sans-serif;color:#262626;transform:translateX(-100%) scaleX(1.0024);transform-origin:right center;">$6,912.00</span>
<span class="t" style="left:1238.6px;top:1060.0px;font:19.8px/19.8px 'Liberation Sans',Arial,sans-serif;color:#262626;transform:scaleX(0.9540);transform-origin:left center;">B</span>
<span class="t" style="left:636.0px;top:1098.1px;font:19.8px/19.8px 'Liberation Sans',Arial,sans-serif;color:#262626;transform:translateX(-100%) scaleX(1.0079);transform-origin:right center;">December 2020</span>
<span class="t" style="left:648.0px;top:1098.1px;font:19.8px/19.8px 'Liberation Sans',Arial,sans-serif;color:#262626;transform:scaleX(1.0091);transform-origin:left center;">Portland, ME</span>
<span class="t" style="left:775.0px;top:1098.1px;font:19.8px/19.8px 'Liberation Sans',Arial,sans-serif;color:#262626;transform:scaleX(0.9974);transform-origin:left center;">Headphones</span>
<span class="t" style="left:1003.4px;top:1098.1px;font:19.8px/19.8px 'Liberation Sans',Arial,sans-serif;color:#262626;transform:translateX(-100%) scaleX(0.9384);transform-origin:right center;">212</span>
<span class="t" style="left:1016.0px;top:1098.1px;font:19.8px/19.8px 'Liberation Sans',Arial,sans-serif;color:#262626;transform:scaleX(0.8032);transform-origin:left center;">PCS</span>
<span class="t" style="left:1227.3px;top:1098.1px;font:19.8px/19.8px 'Liberation Sans',Arial,sans-serif;color:#262626;transform:translateX(-100%) scaleX(1.0030);transform-origin:right center;">$10,176.00</span>
<span class="t" style="left:1238.6px;top:1098.1px;font:19.8px/19.8px 'Liberation Sans',Arial,sans-serif;color:#262626;transform:scaleX(0.9540);transform-origin:left center;">B</span>
<span class="t" style="left:636.0px;top:1136.1px;font:19.8px/19.8px 'Liberation Sans',Arial,sans-serif;color:#262626;transform:translateX(-100%) scaleX(0.9917);transform-origin:right center;">January 2021</span>
<span class="t" style="left:648.0px;top:1136.1px;font:19.8px/19.8px 'Liberation Sans',Arial,sans-serif;color:#262626;transform:scaleX(1.0091);transform-origin:left center;">Portland, ME</span>
<span class="t" style="left:775.0px;top:1136.1px;font:19.8px/19.8px 'Liberation Sans',Arial,sans-serif;color:#262626;transform:scaleX(0.9974);transform-origin:left center;">Headphones</span>
<span class="t" style="left:1003.4px;top:1136.1px;font:19.8px/19.8px 'Liberation Sans',Arial,sans-serif;color:#262626;transform:translateX(-100%) scaleX(0.9384);transform-origin:right center;">408</span>
<span class="t" style="left:1016.0px;top:1136.1px;font:19.8px/19.8px 'Liberation Sans',Arial,sans-serif;color:#262626;transform:scaleX(0.8032);transform-origin:left center;">PCS</span>
<span class="t" style="left:1227.3px;top:1136.1px;font:19.8px/19.8px 'Liberation Sans',Arial,sans-serif;color:#262626;transform:translateX(-100%) scaleX(1.0030);transform-origin:right center;">$19,584.00</span>
<span class="t" style="left:1238.6px;top:1136.1px;font:19.8px/19.8px 'Liberation Sans',Arial,sans-serif;color:#262626;transform:scaleX(0.9540);transform-origin:left center;">A</span>
<div class="l" style="left:904px;top:1046.2px;width:157px;height:33.6px;background:#fff;border:3px solid #1f72e2;box-shadow:0 2px 6px 1px rgba(60,64,67,.28)"></div>
<span class="t" style="left:910.0px;top:1055.0px;font:22px/22px 'Liberation Mono',monospace;letter-spacing:-1.66px;color:#6a6a6a">=SUM(<span style="color:#f5b27a">D21:D24</span>)</span>
<i class="l" style="left:602.70px;top:715.0px;width:1.6px;height:32.0px;background:#dadce0"></i>
<i class="l" style="left:792.70px;top:715.0px;width:1.6px;height:32.0px;background:#dadce0"></i>
<i class="l" style="left:1065.40px;top:715.0px;width:1.6px;height:32.0px;background:#dadce0"></i>
<span class="t" style="left:464.5px;top:718.2px;font:italic bold 29px/29px 'Liberation Mono',monospace;color:#5f6368;transform:skewX(-13deg);transform-origin:left bottom">I</span>
<span class="t" style="left:523.5px;top:718.0px;font:bold 27.6px/27.6px 'Liberation Sans',Arial,sans-serif;color:#5f6368;transform:translateX(-50%) scaleX(0.79);transform-origin:center center">S</span>
<svg width="1297" height="1190"><rect x="512.0" y="731.0" width="23.0" height="3.0" fill="#5f6368"/><rect x="511" y="728.8" width="25" height="2.2" fill="#fff"/></svg>
<span class="t" style="left:571.7px;top:714.5px;font:26.4px/26.4px 'Liberation Sans',Arial,sans-serif;color:#5f6368;transform:translateX(-50%);transform-origin:center center;-webkit-text-stroke:0.5px #5f6368;">A</span>
<svg width="1297" height="1190"><rect x="554.9" y="744.2" width="35.3" height="6.5" fill="#000"/></svg>
<svg width="1297" height="1190"><g transform="translate(621.2 716.0) scale(1.27)"><path d="M16.56 8.94L7.62 0 6.21 1.41l2.38 2.38-5.15 5.15c-.59.59-.59 1.54 0 2.12l5.5 5.5c.29.29.68.44 1.06.44s.77-.15 1.06-.44l5.5-5.5c.59-.58.59-1.53 0-2.12zM5.21 10L10 5.21 14.79 10H5.21zM19 11.5s-2 2.170-2 3.5c0 1.1.9 2 2 2s2-.9 2-2c0-1.330-2-3.500-2-3.500z" fill="#5f6368"/></g></svg>
<svg width="1297" height="1190"><path d="M674.2 719.2h22.8v23h-22.800zM677.5 722.5v6.500h6.450v-6.500zM687.250 722.5v6.500h6.450v-6.500zM677.5 732.3v6.600h6.450v-6.600zM687.250 732.3v6.600h6.450v-6.600z" fill="#5f6368" fill-rule="evenodd"/></svg>
<svg width="1297" height="1190"><g fill="none" stroke="#c2c4c7" stroke-width="2.4"><path d="M723 726v-5.500h6M735 720.5h6.500M747 726v-5.500h-4M723 735v5.700h6M735 740.700h6.500M747 735v5.700h-4"/><path d="M722 730.600h9M748 730.600h-9" stroke-width="2.200"/><path d="M728.5 727.300l3.300 3.300-3.300 3.300M741.500 727.300l-3.300 3.300 3.300 3.300" stroke-width="1.800"/></g></svg>
<svg width="1297" height="1190"><path d="M766.0 729.8h11.0l-5.5 5.5z" fill="#c2c4c7"/></svg>
<svg width="1297" height="1190"><g fill="#5f6368"><rect x="811.4" y="719.4" width="23.6" height="2.8"/><rect x="817.6" y="726.0" width="17.4" height="2.8"/><rect x="811.4" y="732.600" width="23.6" height="2.8"/><rect x="817.6" y="739.2" width="17.4" height="2.8"/></g></svg>
<svg width="1297" height="1190"><path d="M843.7 729.2h12.8l-6.4 6.4z" fill="#5f6368"/></svg>
<svg width="1297" height="1190"><g fill="#5f6368"><rect x="876.8" y="739.4" width="20.4" height="2.8"/><rect x="885.600" y="720.3" width="2.8" height="11"/><path d="M880.600 729.5h12.800l-6.400 6.700z"/></g></svg>
<svg width="1297" height="1190"><path d="M908.9 729.2h12.8l-6.4 6.4z" fill="#5f6368"/></svg>
<svg width="1297" height="1190"><g fill="none" stroke="#5f6368" stroke-width="2.600"><path d="M941.200 720v22.200M961.500 720v22.200"/><path d="M946 725.200h7.500a3.600 3.600 0 0 1 0 7.300h-5" stroke-width="2.400"/></g><path d="M951.500 728.700v7.600l-5.200-3.800z" fill="#5f6368"/></svg>
<svg width="1297" height="1190"><path d="M972.9 729.2h12.8l-6.4 6.4z" fill="#5f6368"/></svg>
<svg width="1297" height="1190"><g fill="none" stroke="#5f6368" stroke-width="2.400"><path d="M1004.600 720.300l12.600 5.700-7.200 7.500z"/><path d="M1011.500 742l15-15.500"/><path d="M1020.300 724.800l7.300 .4-.3 7.300" stroke-width="2.200"/></g></svg>
<svg width="1297" height="1190"><path d="M1037.9 729.2h12.7l-6.3 6.3z" fill="#5f6368"/></svg>
<svg width="1297" height="1190"><g fill="none" stroke="#c2c4c7" stroke-width="2.600"><path d="M1094.500 725.900h-5.400a5.400 5.400 0 0 0 0 10.800h5.400M1099.600 725.900h5.400a5.400 5.400 0 0 1 0 10.800h-5.400M1091.500 731.300h11"/></g></svg>
<svg width="1297" height="1190"><g fill="none" stroke="#5f6368" stroke-width="2.400"><path d="M1132.400 720.500h20.400v15.800h-15.800l-4.600 4.600z" stroke-linejoin="round"/><path d="M1142.600 723.500v9.800M1137.700 728.400h9.800"/></g></svg>
<svg width="1297" height="1190"><rect x="1177" y="719.300" width="24.400" height="23.300" fill="none" stroke="#5f6368" stroke-width="2.600"/><g fill="#5f6368"><rect x="1181.800" y="730.5" width="3.200" height="8"/><rect x="1187.600" y="724.5" width="3.200" height="14"/><rect x="1193.400" y="733" width="3.200" height="5.500"/></g></svg>
<svg width="1297" height="1190"><path d="M1228.600 723.800h16.600l-6.800 8.600v7.800h-3v-7.800z" fill="none" stroke="#5f6368" stroke-width="2.400" stroke-linejoin="miter"/></svg>
<svg width="1297" height="1190"><path d="M1267.0 729.2h13.0l-6.5 6.5z" fill="#5f6368"/></svg>
</div>
<svg width="1297" height="1190"><polyline points="1297,695.2 482.0,695.1 466.8,718.1 487.0,741.5 462.2,779.2 472.5,815.5 455.1,833.7 477.9,851.2 453.7,875.0 468.9,899.2 456.3,924.2 473.3,950.4 450.1,968.0 469.5,985.5 445.1,1010.9 468.5,1035.5 447.7,1063.8 461.8,1092.6 435.6,1125.3 459.8,1157.2 429.5,1188.9 429.5,1188.9 1296,1188.9" fill="none" stroke="#6f6f6f" stroke-width="1.6" stroke-linejoin="miter"/></svg>
</body></html>
